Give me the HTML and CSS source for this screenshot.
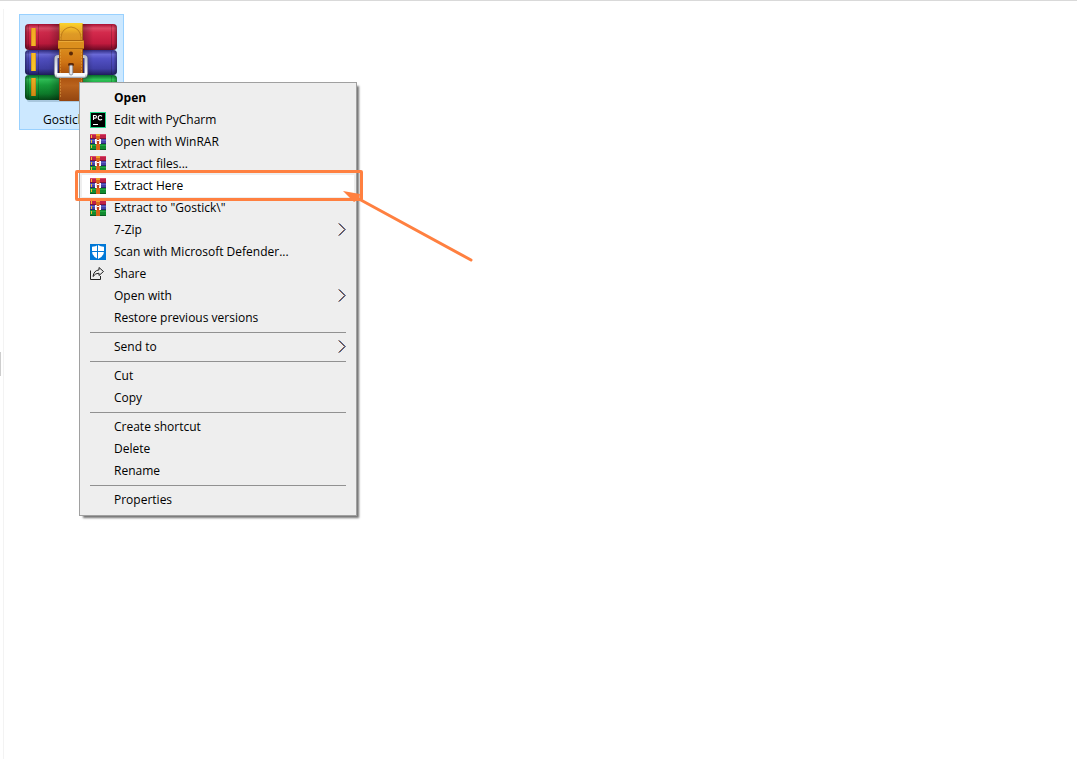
FILE: index.html
```html
<!DOCTYPE html>
<html lang="en">
<head>
  <meta charset="UTF-8">
  <meta name="viewport" content="width=device-width, initial-scale=1.0">
  <title>Gostick</title>
  <link rel="stylesheet" href="styles.css">
</head>
<body>
  <!-- shared icons -->
  <svg class="defs" width="0" height="0" aria-hidden="true">
    <defs>
      <symbol id="rar-small" viewBox="0 0 16 16">
        <path d="M0 0h16v5H0z" fill="#c02048"/>
        <path d="M0 0h16v1H0z" fill="#d8486a"/>
        <path d="M0 5h16v5H0z" fill="#4543a8"/>
        <path d="M0 6h16v1H0z" fill="#6462c8"/>
        <path d="M0 10h16v6H0z" fill="#128a30"/>
        <path d="M0 11h16v1H0z" fill="#24a845"/>
        <path d="M0 4h16v1H0z" fill="#7d1238"/>
        <path d="M0 9h16v1H0z" fill="#29276e"/>
        <path d="M0 15h16v1H0z" fill="#0a5a20"/>
        <path d="M1 1h1v3H1zM1 6h1v3H1zM1 11h1v3H1z" fill="#f5bd2b"/>
        <path d="M6 0h4v16H6z" fill="#d9641a"/>
        <path d="M6 0h4v2H6z" fill="#eda02c"/>
        <path d="M6 5h4v5H6z" fill="#c2401c"/>
        <path d="M5 5h1v5H5zM10 5h1v5h-1zM6 9h1v1H6zM9 9h1v1H9zM7 6h2v1H7z" fill="#fff"/>
        <path d="M6 5h1v4H6zM9 5h1v4H9z" fill="#f3d9d3"/>
      </symbol>
      <symbol id="chevron" viewBox="0 0 8 13">
        <path d="M0.5 0.5l6 6l-6 6" fill="none" stroke="#d98a45"/>
        <path d="M1.5 0.5l6 6l-6 6" fill="none" stroke="#5aa0e6"/>
        <path d="M1 0.5l6 6l-6 6" fill="none" stroke="#2b1b3c" stroke-width="0.9"/>
      </symbol>
    </defs>
  </svg>

  <main class="explorer">
    <span class="splitter"></span>

    <div class="file">
      <svg class="file-icon" viewBox="0 0 96 84" aria-hidden="true">
        <defs>
          <linearGradient id="red" x1="0" y1="0" x2="0" y2="1">
            <stop offset="0" stop-color="#a80f32"/>
            <stop offset="0.16" stop-color="#dc4a66"/>
            <stop offset="0.32" stop-color="#d42b4d"/>
            <stop offset="0.75" stop-color="#c01a3d"/>
            <stop offset="1" stop-color="#6b0a24"/>
          </linearGradient>
          <linearGradient id="blue" x1="0" y1="0" x2="0" y2="1">
            <stop offset="0" stop-color="#2f2c80"/>
            <stop offset="0.18" stop-color="#6a69d6"/>
            <stop offset="0.35" stop-color="#5150c4"/>
            <stop offset="0.75" stop-color="#403fa6"/>
            <stop offset="1" stop-color="#1f1d5c"/>
          </linearGradient>
          <linearGradient id="green" x1="0" y1="0" x2="0" y2="1">
            <stop offset="0" stop-color="#08692a"/>
            <stop offset="0.18" stop-color="#2fc257"/>
            <stop offset="0.4" stop-color="#18a23c"/>
            <stop offset="0.75" stop-color="#0d7e2b"/>
            <stop offset="1" stop-color="#064717"/>
          </linearGradient>
          <linearGradient id="belt" x1="0" y1="0" x2="0" y2="1">
            <stop offset="0" stop-color="#fbd42c"/>
            <stop offset="0.08" stop-color="#f0b428"/>
            <stop offset="0.14" stop-color="#de9a26"/>
            <stop offset="0.34" stop-color="#d98a1c"/>
            <stop offset="0.5" stop-color="#cf7414"/>
            <stop offset="0.66" stop-color="#a64c0a"/>
            <stop offset="0.8" stop-color="#b9621c"/>
            <stop offset="1" stop-color="#934510"/>
          </linearGradient>
          <linearGradient id="gold" x1="0" y1="0" x2="0" y2="1">
            <stop offset="0" stop-color="#f5a623"/>
            <stop offset="0.6" stop-color="#f8c52a"/>
            <stop offset="1" stop-color="#d08812"/>
          </linearGradient>
          <linearGradient id="shade" x1="0" y1="0" x2="1" y2="0">
            <stop offset="0" stop-color="#000" stop-opacity="0.4"/>
            <stop offset="0.04" stop-color="#000" stop-opacity="0"/>
            <stop offset="0.26" stop-color="#000" stop-opacity="0.05"/>
            <stop offset="0.38" stop-color="#000" stop-opacity="0.3"/>
            <stop offset="0.62" stop-color="#000" stop-opacity="0.3"/>
            <stop offset="0.74" stop-color="#000" stop-opacity="0"/>
            <stop offset="0.96" stop-color="#000" stop-opacity="0"/>
            <stop offset="1" stop-color="#000" stop-opacity="0.35"/>
          </linearGradient>
          <linearGradient id="steel" gradientUnits="userSpaceOnUse" x1="0" y1="33" x2="0" y2="55">
            <stop offset="0" stop-color="#b9bcc6"/>
            <stop offset="0.5" stop-color="#e2e4ea"/>
            <stop offset="0.85" stop-color="#fdfdff"/>
            <stop offset="1" stop-color="#a9adb8"/>
          </linearGradient>
        </defs>
        <rect x="4" y="76" width="88" height="4" rx="2" fill="#7695ad" opacity="0.4"/>
        <!-- books -->
        <rect x="2" y="2" width="92" height="26" rx="4" fill="url(#red)"/>
        <rect x="2" y="28" width="92" height="25" rx="4" fill="url(#blue)"/>
        <rect x="2" y="53" width="92" height="25" rx="4" fill="url(#green)"/>
        <rect x="2" y="2" width="92" height="26" rx="4" fill="url(#shade)"/>
        <rect x="2" y="28" width="92" height="25" rx="4" fill="url(#shade)"/>
        <rect x="2" y="53" width="92" height="25" rx="4" fill="url(#shade)"/>
        <path d="M5.5 3v23M15.5 3v23M88.5 3v23M5.5 29v23M15.5 29v23M88.5 29v23M5.5 54v23M15.5 54v23M88.5 54v23" stroke="#000" stroke-opacity="0.18"/>
        <path d="M8 6h5v18H8zM8 31h5v18H8zM8 56h5v18H8z" fill="url(#gold)"/>
        <path d="M8.5 6v18M8.5 31v18M8.5 56v18M12.5 6v18M12.5 31v18M12.5 56v18" stroke="#5a2a10" stroke-opacity="0.2"/>
        <!-- buckle and belt -->
        <path d="M37 35.5H34q-1.5 0-1.500 2v15q0 2.500 2.500 2.500h26q2.500 0 2.500-2.500v-15q0-2-1.500-2h-3" fill="none" stroke="#454a60" stroke-width="4" opacity="0.4"/>
        <rect x="36" y="1" width="24" height="78" rx="1" fill="url(#belt)"/>
        <path d="M37.5 4v71M58.5 4v71" stroke="#f1b956" stroke-width="0.7" stroke-dasharray="2 1" opacity="0.6"/>
        <path d="M36.5 2v76M59.5 2v76" stroke="#6e3206" stroke-width="0.8" opacity="0.6"/>
        <path d="M38 18v-3q1-9 10-10q9 1 10 10v3" fill="none" stroke="#b57414" stroke-width="0.8"/>
        <rect x="35" y="18" width="26" height="9" rx="1" fill="#db8f1e"/>
        <path d="M35 18.5h26M35 26.5h26" stroke="#a8660f" stroke-width="1"/>
        <path d="M36 19.5h24" stroke="#eeb040" stroke-width="0.8"/>
        <circle cx="48" cy="31.5" r="2" fill="#5a2807"/>
        <path d="M36 34.5h-1q-2 0-2 2v15q0 3 3 3h24q3 0 3-3v-15q0-2-2-2h-1" fill="none" stroke="url(#steel)" stroke-width="3"/>
        <path d="M34 52.8h28" stroke="#f7f8fc" stroke-width="3.6"/>
        <path d="M35 55.5h26" stroke="#a3a7b4" stroke-width="1"/>
        <rect x="45" y="41" width="6" height="3" rx="1.5" fill="#5c2505"/>
        <rect x="46.3" y="43" width="3.5" height="10" rx="1.7" fill="#dfe2ea" stroke="#6d7183" stroke-width="0.7"/>
      </svg>
      <span class="file-name">Gostick</span>
    </div>

    <div class="menu" role="menu">
      <button class="item default" role="menuitem"><span class="icon"></span>Open</button>
      <button class="item" role="menuitem">
        <svg class="icon" viewBox="0 0 16 16" aria-hidden="true">
          <rect x="0.5" y="0.5" width="15" height="15" fill="#000" stroke="#21d789"/>
          <path d="M3.500 8V3.500h1.700q1.300 0 1.300 1.300t-1.300 1.300H3.500M12 4.300q-0.700-0.800-1.800-0.800-2 0-2 2.200t2 2.200q1.100 0 1.800-0.800" fill="none" stroke="#fff" stroke-width="1.1"/>
          <path d="M3 12.5h5" stroke="#fff" stroke-width="1"/>
        </svg>
        Edit with PyCharm
      </button>
      <button class="item" role="menuitem"><svg class="icon" aria-hidden="true"><use href="#rar-small"/></svg>Open with WinRAR</button>
      <button class="item" role="menuitem"><svg class="icon" aria-hidden="true"><use href="#rar-small"/></svg>Extract files...</button>
      <button class="item active" role="menuitem">
        <svg class="icon" aria-hidden="true"><use href="#rar-small"/></svg>
        Extract Here
        <span class="callout"></span>
        <svg class="pointer" viewBox="0 0 132 74" aria-hidden="true">
          <path d="M16 8L128 69" stroke="#ff8040" stroke-width="3" stroke-linecap="round"/>
          <path d="M0 0L17 3L16 8L11 11Z" fill="#ff8040"/>
        </svg>
      </button>
      <button class="item" role="menuitem"><svg class="icon" aria-hidden="true"><use href="#rar-small"/></svg>Extract to "Gostick\"</button>
      <button class="item" role="menuitem"><span class="icon"></span>7-Zip<svg class="chevron" aria-hidden="true"><use href="#chevron"/></svg></button>
      <button class="item" role="menuitem">
        <svg class="icon" viewBox="0 0 16 16" aria-hidden="true">
          <rect width="16" height="16" fill="#0078d7"/>
          <path d="M8 1q2.500 1.800 6 1.800V7q0 5.500-6 8-6-2.500-6-8V2.800Q5.500 2.800 8 1z" fill="#fff"/>
          <path d="M7.5 1v14M1 7.5h14" stroke="#0078d7" stroke-width="1"/>
        </svg>
        Scan with Microsoft Defender...
      </button>
      <button class="item" role="menuitem">
        <svg class="icon" viewBox="0 0 16 16" aria-hidden="true">
          <path d="M0.5 4.5v9h10V10" fill="none" stroke="#222" stroke-width="1"/>
          <path d="M9 1.5L13.5 5.500L9 9.500V7.200Q5.500 7 3 10.500Q3.800 4.500 9 3.900z" fill="none" stroke="#222" stroke-width="1"/>
        </svg>
        Share
      </button>
      <button class="item" role="menuitem"><span class="icon"></span>Open with<svg class="chevron" aria-hidden="true"><use href="#chevron"/></svg></button>
      <button class="item" role="menuitem"><span class="icon"></span>Restore previous versions</button>
      <hr>
      <button class="item" role="menuitem"><span class="icon"></span>Send to<svg class="chevron" aria-hidden="true"><use href="#chevron"/></svg></button>
      <hr>
      <button class="item" role="menuitem"><span class="icon"></span>Cut</button>
      <button class="item" role="menuitem"><span class="icon"></span>Copy</button>
      <hr>
      <button class="item" role="menuitem"><span class="icon"></span>Create shortcut</button>
      <button class="item" role="menuitem"><span class="icon"></span>Delete</button>
      <button class="item" role="menuitem"><span class="icon"></span>Rename</button>
      <hr>
      <button class="item" role="menuitem"><span class="icon"></span>Properties</button>
    </div>
  </main>
</body>
</html>
```

FILE: styles.css
```css
* {
  box-sizing: border-box;
}
body {
  margin: 0;
  background: #fff;
  color: #000;
  font-family: "Segoe UI", "Open Sans", "Noto Sans", sans-serif;
  font-size: 12px;
}
.defs {
  position: absolute;
}
.explorer {
  position: relative;
  display: flex;
  align-items: flex-start;
  min-height: 100vh;
  border-top: 1px solid #d9d9d9;
  padding: 13px 19px;
  overflow: hidden;
}

/* pane edge and its grip on the left */
.explorer::before {
  content: "";
  position: absolute;
  left: 3px;
  top: 8px;
  bottom: 0;
  width: 1px;
  background: #f3f3f3;
}
.splitter {
  position: absolute;
  left: 0;
  top: 351px;
  width: 1px;
  height: 24px;
  background: #cdcdcd;
}

.file {
  display: flex;
  flex-direction: column;
  gap: 6px;
  width: 105px;
  padding: 7px 3px 2px;
  background: #cce8ff;
  border: 1px solid #99d1ff;
}
.file-icon {
  width: 96px;
  height: 84px;
}
.file-name {
  padding-left: 20px;
  line-height: 15px;
}

.menu {
  position: absolute;
  left: 79px;
  top: 81px;
  width: 278px;
  padding: 4px 2px;
  background: #eee;
  border: 1px solid #a0a0a0;
  box-shadow: 3px 3px 2px -1px rgba(0, 0, 0, 0.55);
}
.item {
  position: relative;
  display: flex;
  align-items: center;
  gap: 8px;
  width: 100%;
  height: 22px;
  padding: 0 8px 1px;
  border: 0;
  background: none;
  color: inherit;
  font: inherit;
  line-height: 16px;
  text-align: left;
  white-space: nowrap;
}
.item.default {
  font-weight: bold;
}
.item.active {
  background: #fff;
  z-index: 1;
}
.icon {
  flex: none;
  width: 16px;
  height: 16px;
}
.chevron {
  width: 8px;
  height: 13px;
  margin-left: auto;
}
.menu hr {
  height: 1px;
  margin: 3px 8px;
  border: 0;
  background: #919191;
}

/* orange frame and arrow over the active item */
.callout {
  position: absolute;
  top: -5px;
  right: -9px;
  bottom: -4px;
  left: -7px;
  border: 3px solid #ff8040;
  border-radius: 2px;
}
.pointer {
  position: absolute;
  left: 261px;
  top: 16px;
  width: 132px;
  height: 74px;
}
```
